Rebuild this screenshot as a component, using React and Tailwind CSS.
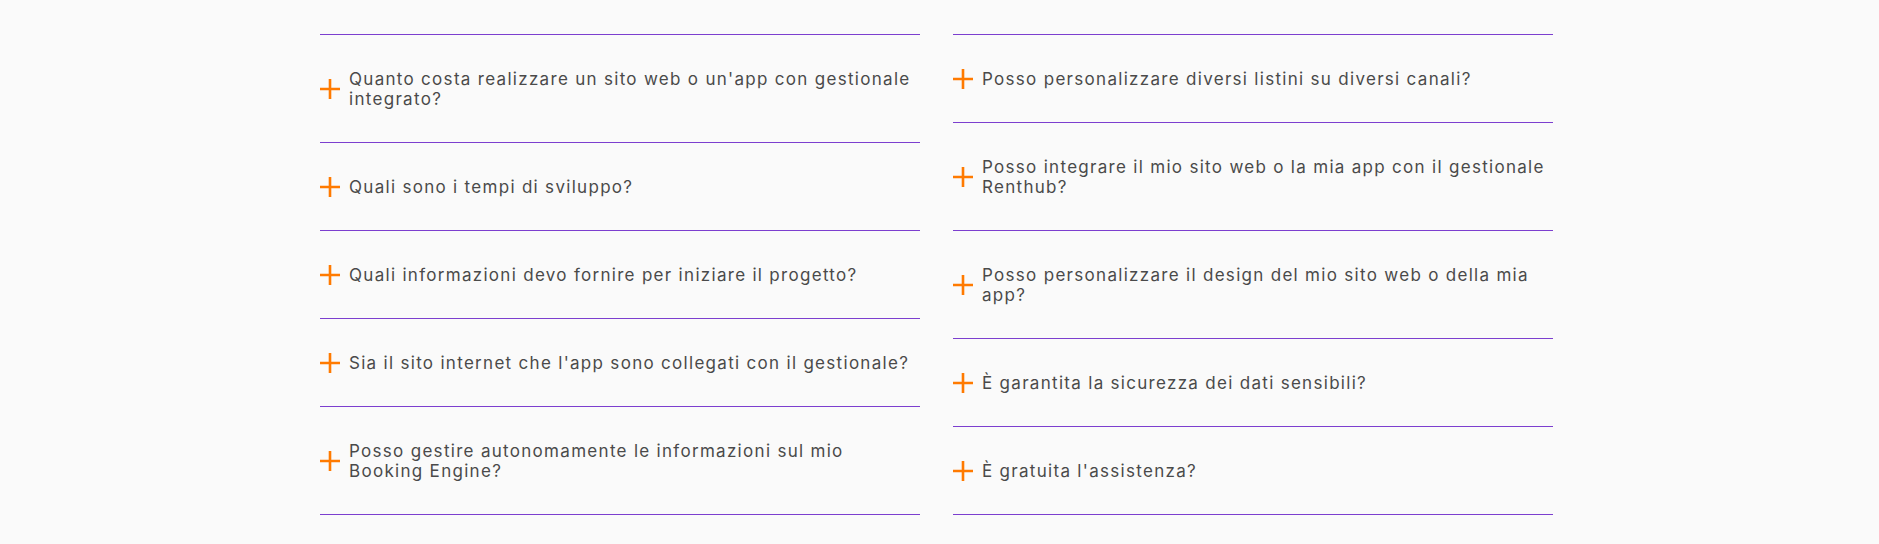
import React from 'react';

const leftFaq = [
  "Quanto costa realizzare un sito web o un'app con gestionale integrato?",
  'Quali sono i tempi di sviluppo?',
  'Quali informazioni devo fornire per iniziare il progetto?',
  "Sia il sito internet che l'app sono collegati con il gestionale?",
  'Posso gestire autonomamente le informazioni sul mio Booking Engine?',
];

const rightFaq = [
  'Posso personalizzare diversi listini su diversi canali?',
  'Posso integrare il mio sito web o la mia app con il gestionale Renthub?',
  'Posso personalizzare il design del mio sito web o della mia app?',
  'È garantita la sicurezza dei dati sensibili?',
  "È gratuita l'assistenza?",
];

const PlusIcon = () => (
  <svg width="20" height="20" viewBox="0 0 20 20" className="shrink-0" aria-hidden="true">
    <path d="M10 0v20M0 10h20" stroke="#ff7a00" strokeWidth="2.6" fill="none" />
  </svg>
);

const FaqItem = ({ question }) => (
  <button
    type="button"
    className="flex w-full items-center gap-[9px] border-b border-[#7c3fcf] pt-[34px] pb-[33px] text-left"
  >
    <PlusIcon />
    <span className="text-[17px] leading-[20px] tracking-[1.3px] text-[#4a4a4a]">{question}</span>
  </button>
);

const FaqColumn = ({ items }) => (
  <div className="w-[600px] border-t border-[#7c3fcf]">
    {items.map((q) => (
      <FaqItem key={q} question={q} />
    ))}
  </div>
);

export default function App() {
  return (
    <div className="h-[544px] bg-[#fafafa] pl-[320px] pt-[34px] font-['Inter',sans-serif]">
      <div className="flex items-start gap-[33px]">
        <FaqColumn items={leftFaq} />
        <FaqColumn items={rightFaq} />
      </div>
    </div>
  );
}
